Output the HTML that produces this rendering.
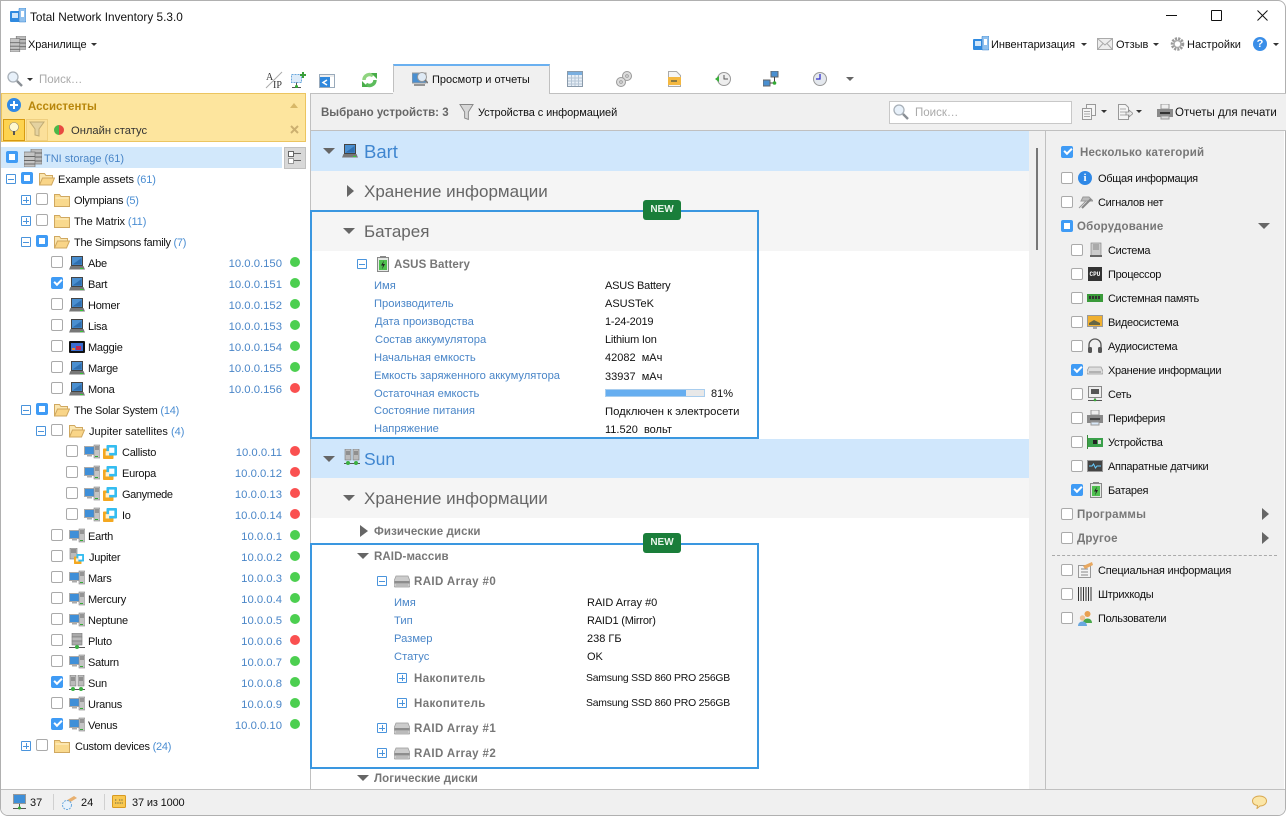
<!DOCTYPE html>
<html lang="ru"><head><meta charset="utf-8"><title>Total Network Inventory 5.3.0</title>
<style>
html,body{margin:0;padding:0;background:#fff}
#w{position:relative;width:1286px;height:816px;overflow:hidden;background:#fff;font:11px/20px "Liberation Sans","Noto Sans CJK SC",sans-serif;color:#111}
#w div,#w span,#w svg,#w i,#w u,#w em,#w b{position:absolute;white-space:nowrap}
#w span{margin-top:1px}
#w i,#w u,#w em{font-style:normal;text-decoration:none;display:block}
.r{left:0;width:310px;height:20px}
.r span{letter-spacing:-.25px}
.c{width:10px;height:10px;border:1px solid #aaa;border-radius:2px;background:#fff;top:4px}
.k{width:12px;height:12px;background:#3f9bf5;border-radius:2px;top:4px}
.k:after{content:"";position:absolute;left:2.5px;top:2px;width:6px;height:3px;border:solid #fff;border-width:0 0 2px 2px;transform:rotate(-45deg)}
.m{width:12px;height:12px;background:#3f9bf5;border-radius:2px;top:4px}
.m:after{content:"";position:absolute;left:3px;top:3px;width:6px;height:6px;background:#fff}
.tr .c,.tr .k,.tr .m{top:3px}
.e{width:8px;height:8px;border:1px solid #4a94dc;border-radius:1px;top:5px}
.e:before{content:"";position:absolute;left:1px;top:3px;width:6px;height:1px;margin-top:.5px;background:#4a94dc}
.p:after{content:"";position:absolute;left:3.5px;top:1px;width:1px;height:6px;background:#4a94dc}
.i{width:16px;height:16px;top:2px}
.n{color:#4a8dd2}
#w .ip{left:180px;width:102px;text-align:right;color:#4a86c8;top:0;margin-top:1px;font-size:11.3px;font-weight:normal}
.d{left:290px;top:4px;width:10px;height:10px;border-radius:50%}
.g{background:#4ccf50}.o{background:#fa5050}
.a{color:#4a86c8;font-size:11.2px}
#w .h{color:#777;font-weight:bold;font-size:11.5px;letter-spacing:.1px}
#w .h2{letter-spacing:.4px}
#w .big{font-size:17px;color:#666;line-height:24px;margin-top:1px}
.sec{left:311px;width:718px;height:40px}
.dn{width:0;height:0;border:solid transparent;border-width:6px 6px 0;border-top-color:#666}
.rt{width:0;height:0;border:solid transparent;border-width:6px 0 6px 8px;border-left-color:#666}
.sa{width:0;height:0;border:solid transparent;border-width:3px 3px 0;border-top-color:#333}
.box{border:2px solid #3a97e0;box-sizing:border-box;left:310px;width:449px}
.new{left:643px;width:38px;height:20px;background:#1a7e3a;border-radius:3px;color:#e8f5ea;font-weight:bold;font-size:10px;line-height:20px;text-align:center}
.q{height:20px;left:0;width:1286px}
.q span{letter-spacing:-.3px}
#w .q span.h{letter-spacing:.2px}
.v{letter-spacing:-.2px}
</style></head><body>
<div id="w">
<svg width="0" height="0" style="position:absolute">
<defs>
<symbol id="lap" viewBox="0 0 16 16"><rect x="2.5" y="1.5" width="11" height="9" fill="#4a8fd0" stroke="#444"/><path d="M3.500 9.500 12.500 3v6.500z" fill="#2f6fb0"/><path d="M1.500 11h13l1.500 3.500H0z" fill="#777"/><path d="M11 13.500h3" stroke="#3c3"/></symbol>
<symbol id="tab" viewBox="0 0 16 16"><rect x="0" y="2" width="16" height="12" rx="1" fill="#111"/><rect x="2" y="4" width="12" height="8" fill="#3a6cd0"/><rect x="7" y="7" width="5" height="4" fill="#c02850"/><rect x="3" y="9" width="3" height="2" fill="#e88030"/></symbol>
<symbol id="pc" viewBox="0 0 16 16"><rect x=".5" y="2.500" width="10" height="8" fill="#3f8fd8" stroke="#aaa"/><path d="M3 10.500h5v2H3z" fill="#aaa"/><rect x="10" y="1" width="6" height="13" fill="#c4c4c4" stroke="#888" stroke-width=".6"/><path d="M11 3h4M11 5h4" stroke="#666"/><rect x="11" y="12" width="3" height="1" fill="#3a3"/></symbol>
<symbol id="vm" viewBox="0 0 16 16"><rect x="0" y="4" width="12" height="12" rx="1" fill="#f4a820"/><rect x="4" y="0" width="12" height="12" rx="1" fill="#35bdf0"/><rect x="7" y="3" width="6" height="6" fill="#fff"/><rect x="3" y="7" width="4" height="5" fill="#fdf0d0"/></symbol>
<symbol id="srv" viewBox="0 0 16 16"><rect x="3" y="0" width="10" height="4" fill="#aaa" stroke="#777" stroke-width=".6"/><rect x="3" y="4" width="10" height="4" fill="#bbb" stroke="#777" stroke-width=".6"/><rect x="3" y="8" width="10" height="4" fill="#aaa" stroke="#777" stroke-width=".6"/><path d="M0 14.500h16" stroke="#555"/><circle cx="8" cy="14" r="2" fill="#3cb043"/></symbol>
<symbol id="srv2" viewBox="0 0 16 16"><rect x="1" y="0" width="6" height="11" fill="#bbb" stroke="#777" stroke-width=".6"/><rect x="9" y="0" width="6" height="11" fill="#bbb" stroke="#777" stroke-width=".6"/><path d="M2 3h4M2 5h4M10 3h4M10 5h4" stroke="#666"/><path d="M0 14.500h16" stroke="#555"/><circle cx="4" cy="14" r="2" fill="#3cb043"/><circle cx="12" cy="14" r="2" fill="#3cb043"/></symbol>
<symbol id="stor" viewBox="0 0 18 18"><rect x="7" y="0" width="11" height="15" fill="#bbb" stroke="#777" stroke-width=".7"/><rect x="0" y="3" width="11" height="15" fill="#c4c4c4" stroke="#777" stroke-width=".7"/><path d="M0 7.500h11M0 11.500h11M0 15h11M11 4h7M11 8h7M11 12h7" stroke="#666"/></symbol>
<symbol id="fold" viewBox="0 0 16 16"><path d="M.5 14.500V2.500h5l1.500 2h8.500v10z" fill="#f9d98e" stroke="#d0a860"/><path d="M1.500 6h13" stroke="#fff3d0"/></symbol>
<symbol id="ofold" viewBox="0 0 16 16"><path d="M.5 14V2.500h5l1.500 2h6.500V7" fill="#fbe6b0" stroke="#d0a860"/><path d="M.5 14l3-7h12l-3 7z" fill="#f9d588" stroke="#d0a860"/></symbol>
<symbol id="mag" viewBox="0 0 16 16"><circle cx="6" cy="6" r="5" fill="#e8f1fa" stroke="#a8b0b8" stroke-width="1.300"/><path d="M10 10l5 5" stroke="#8a8f95" stroke-width="2.400"/></symbol>
<symbol id="inv" viewBox="0 0 16 16"><rect x="0" y="3" width="10" height="11" rx="1" fill="#2f8ae0"/><rect x="2" y="5" width="6" height="5" fill="#cfe6fb"/><rect x="9" y="0" width="7" height="14" rx="1" fill="#8fc0ee" stroke="#3a85d0" stroke-width=".6"/><rect x="11" y="3" width="3" height="6" fill="#fff"/></symbol>
<symbol id="fun" viewBox="0 0 16 18"><path d="M1 1h14L10 9v8l-4-1.500V9z" fill="#d8d8d8" stroke="#888"/></symbol>
<symbol id="bat" viewBox="0 0 12 16"><rect x="3" y="0" width="6" height="2" fill="#888"/><rect x=".5" y="1.500" width="11" height="14" fill="#e4e8e4" stroke="#888"/><rect x="2" y="4" width="8" height="10" fill="#4fc04f"/><path d="M7 4.500 4 9.500h2l-1 4 3-5.500H6z" fill="#222"/></symbol>
<symbol id="hdd" viewBox="0 0 16 16"><path d="M2 3h12l2 5v5a1 1 0 0 1-1 1H1a1 1 0 0 1-1-1V8z" fill="#ccc" stroke="#999" stroke-width=".7"/><path d="M.5 8h15v2.500H.5z" fill="#8d8d8d"/><path d="M2 12h12" stroke="#aaa"/></symbol>
</defs></svg>

<!-- window frame -->
<div style="left:0;top:0;width:1284px;height:814px;border:1px solid #b0b0b0;border-radius:0 8px 8px 8px"></div>

<!-- title -->
<svg class="i" style="left:10px;top:8px"><use href="#inv"/></svg>
<span style="left:30px;top:6px;font-size:11.8px">Total Network Inventory 5.3.0</span>
<div style="left:1166px;top:15px;width:11px;height:1px;background:#111"></div>
<div style="left:1211px;top:10px;width:9px;height:9px;border:1px solid #111;border-radius:1px"></div>
<svg style="left:1257px;top:10px;width:11px;height:11px"><path d="M.5.500l10 10M10.500.500l-10 10" stroke="#111" fill="none"/></svg>

<!-- menu -->
<svg class="i" style="left:10px;top:36px"><use href="#stor"/></svg>
<span style="left:28px;top:34px;letter-spacing:-.1px">Хранилище</span><i class="sa" style="left:91px;top:43px"></i>
<svg class="i" style="left:973px;top:36px"><use href="#inv"/></svg>
<span style="left:991px;top:34px;letter-spacing:-.05px">Инвентаризация</span><i class="sa" style="left:1081px;top:43px"></i>
<svg style="left:1097px;top:38px;width:16px;height:12px"><rect x=".5" y=".5" width="15" height="11" fill="#eee" stroke="#aaa"/><path d="M.5.500 8 7l7.500-6.500M.5 11.500 6 5.500M15.500 11.500 10 5.500" fill="none" stroke="#aaa"/></svg>
<span style="left:1116px;top:34px">Отзыв</span><i class="sa" style="left:1153px;top:43px"></i>
<svg class="i" style="left:1170px;top:36px"><circle cx="7.500" cy="8" r="5" fill="none" stroke="#999" stroke-width="3.500" stroke-dasharray="2 1"/><circle cx="7.500" cy="8" r="3.500" fill="none" stroke="#aaa" stroke-width="1.500"/></svg>
<span style="left:1187px;top:34px">Настройки</span>
<div style="left:1253px;top:37px;width:14px;height:14px;border-radius:50%;background:#3a8ee8;color:#fff;font-weight:bold;font-size:11px;line-height:14px;text-align:center">?</div><i class="sa" style="left:1273px;top:43px"></i>

<!-- left search row -->
<svg class="i" style="left:7px;top:71px"><use href="#mag"/></svg><i class="sa" style="left:27px;top:78px"></i>
<span style="left:39px;top:69px;color:#aaa;font-size:11.5px">Поиск…</span>
<svg style="left:265px;top:71px;width:18px;height:18px"><path d="M1 17 17 1" stroke="#aaa"/><text x="1" y="9" font-family="Liberation Serif" font-size="10" fill="#333">A</text><text x="8" y="17" font-family="Liberation Serif" font-size="10" fill="#333">IP</text></svg>
<svg style="left:290px;top:71px;width:16px;height:18px"><rect x="1.500" y="3.500" width="10" height="8" fill="#dcebf9" stroke="#6aa8dd" stroke-dasharray="2 1"/><path d="M10 3h2V1h2v2h2v2h-2v2h-2V5h-2z" fill="#3a9e3a"/><path d="M6.500 11.500v4M2 16.500h9" stroke="#555"/><circle cx="6.500" cy="15.500" r="1.500" fill="#3a3"/></svg>

<!-- tabs -->
<div style="left:310px;top:93px;width:976px;height:1px;background:#c0c0c0"></div>
<svg style="left:319px;top:74px;width:16px;height:14px"><rect x=".5" y=".5" width="15" height="13" fill="#eee" stroke="#9ab"/><rect x="1" y="3" width="10" height="10" fill="#2f88dd"/><rect x="11" y="3" width="4" height="10" fill="#fff"/><path d="M8 6 4 8.500 8 11" fill="none" stroke="#fff" stroke-width="1.500"/></svg>
<svg style="left:362px;top:72px;width:15px;height:16px"><path d="M2 8a5.500 5.500 0 0 1 9-4.200" fill="none" stroke="#8fd47f" stroke-width="3.500"/><path d="M13 8a5.500 5.500 0 0 1-9 4.200" fill="none" stroke="#5cbc5c" stroke-width="3.500"/><path d="M9 1h6v6zM6 15H0V9z" fill="#49ad49"/></svg>
<div style="left:393px;top:64px;width:155px;height:28px;border:1px solid #c0c0c0;border-top:2px solid #6ab0f0;border-bottom:none;background:#f0f0f0"></div>
<div style="left:394px;top:90px;width:155px;height:5px;background:#f0f0f0"></div>
<svg class="i" style="left:412px;top:71px"><rect x="0" y="2" width="14" height="10" fill="#4a8fd0" stroke="#999"/><circle cx="10" cy="6" r="4.500" fill="#dfeaf5" stroke="#999"/><path d="M13 9l3 3M2 14h11" stroke="#777" stroke-width="1.500"/></svg>
<span style="left:432px;top:69px">Просмотр и отчеты</span>
<svg class="i" style="left:567px;top:71px"><rect x=".5" y=".5" width="15" height="15" fill="#e8eff7" stroke="#8a9aaa"/><rect x="1" y="1" width="14" height="3" fill="#7aafe0"/><path d="M1 7h14M1 10h14M1 13h14M4.500 4v11M8 4v11M11.500 4v11" stroke="#b5c5d5"/></svg>
<svg class="i" style="left:616px;top:71px"><circle cx="11" cy="5" r="4.500" fill="#ddd" stroke="#999"/><circle cx="5" cy="11" r="4.500" fill="#ddd" stroke="#999"/><circle cx="11" cy="5" r="1.300" fill="#fff" stroke="#999"/><circle cx="5" cy="11" r="1.300" fill="#fff" stroke="#999"/></svg>
<svg class="i" style="left:667px;top:71px"><path d="M1.500.500h8l4 4v11h-12z" fill="#f5f5f5" stroke="#aaa"/><rect x="1" y="6" width="13" height="8" fill="#f4b840"/><path d="M4 10h6M4 10h1" stroke="#664" stroke-width="1.500"/></svg>
<svg class="i" style="left:715px;top:71px"><circle cx="9" cy="8" r="6.500" fill="#eee" stroke="#999"/><path d="M9 4v4h4" stroke="#555" fill="none"/><path d="M0 8l4-3v6z" fill="#3ab03a"/></svg>
<svg class="i" style="left:763px;top:71px"><rect x="8" y="0" width="7" height="6" fill="#4a8fd0" stroke="#666"/><rect x="0" y="9" width="7" height="6" fill="#4a8fd0" stroke="#666"/><path d="M11.500 6v6H7" stroke="#444" fill="none"/><circle cx="11.500" cy="12" r="1.800" fill="#3a3"/></svg>
<svg class="i" style="left:813px;top:71px"><circle cx="7" cy="8" r="6.500" fill="#e4e8ee" stroke="#999"/><path d="M7 3v5H3" stroke="#33c" fill="none" stroke-width="1.300"/></svg>
<i class="sa" style="left:846px;top:77px;border-width:4px 4px 0;border-top-color:#666"></i>

<!-- left assist -->
<div style="left:1px;top:93px;width:305px;height:49px;background:#fde59e;border:1px solid #ecc560;box-sizing:border-box"></div>
<div style="left:7px;top:98px;width:14px;height:14px;border-radius:50%;background:#2f88e6"></div>
<div style="left:10px;top:104px;width:8px;height:2px;background:#fff"></div><div style="left:13px;top:101px;width:2px;height:8px;background:#fff"></div>
<span style="left:28px;top:96px;font-weight:bold;color:#b8860b;font-size:11.5px">Ассистенты</span>
<i style="left:290px;top:103px;width:0;height:0;border:solid transparent;border-width:0 4px 5px;border-bottom-color:#d8b868"></i>
<div style="left:3px;top:119px;width:20px;height:20px;background:#fdd34f;border:1px solid #d89a10"></div>
<svg class="i" style="left:6px;top:121px"><circle cx="8" cy="6" r="4.500" fill="#fff8d0" stroke="#888" stroke-width=".6"/><path d="M7 10h2v4H7z" fill="#555"/></svg>
<div style="left:26px;top:119px;width:20px;height:20px;background:#fbe09a;border:1px solid #efcf80"></div>
<svg class="i" style="left:29px;top:121px"><path d="M1 1h14L10 8v7l-4-1V8z" fill="#e4d2a0" stroke="#c0ab74"/></svg>
<svg style="left:54px;top:125px;width:10px;height:10px"><path d="M5 0a5 5 0 0 0 0 10z" fill="#4cb848"/><path d="M5 0a5 5 0 0 1 0 10z" fill="#e84a40"/></svg>
<span style="left:71px;top:120px;color:#333;font-size:11.2px">Онлайн статус</span>
<svg style="left:290px;top:125px;width:9px;height:9px"><path d="M1 1l7 7M8 1 1 8" stroke="#ccb070" stroke-width="2"/></svg>

<!-- toolbar -->
<div style="left:311px;top:94px;width:975px;height:36px;background:#f0f0f0"></div>
<div style="left:393px;top:92px;width:155px;height:3px;background:#f0f0f0"></div>
<div style="left:311px;top:130px;width:975px;height:1px;background:#c0c0c0"></div>
<div style="left:310px;top:93px;width:1px;height:696px;background:#c0c0c0"></div>
<span style="left:321px;top:102px;font-weight:bold;color:#666;font-size:11.5px">Выбрано устройств: 3</span>
<svg style="left:459px;top:103px;width:15px;height:18px"><use href="#fun"/></svg>
<span style="left:478px;top:102px;letter-spacing:-.08px">Устройства с информацией</span>
<div style="left:889px;top:101px;width:181px;height:21px;background:#fff;border:1px solid #c8c8c8"></div>
<svg class="i" style="left:893px;top:104px"><use href="#mag"/></svg>
<span style="left:915px;top:102px;color:#aaa;font-size:11.5px">Поиск…</span>
<svg class="i" style="left:1081px;top:104px"><rect x="5.500" y=".5" width="9" height="11" fill="#f5f5f5" stroke="#999"/><rect x="1.500" y="4.500" width="9" height="11" fill="#f5f5f5" stroke="#999"/><path d="M3 7.500h6M3 10h6M3 12.500h6" stroke="#aaa"/></svg><i class="sa" style="left:1101px;top:110px"></i>
<svg class="i" style="left:1117px;top:104px"><path d="M1.500.500h7l3 3v12h-10z" fill="#f5f5f5" stroke="#999"/><path d="M3 5h6M3 8h6M3 11h6" stroke="#aaa"/><path d="M9 8h3V6l4 3.500-4 3.500v-2H9z" fill="#e8e8e8" stroke="#888" stroke-width=".7"/></svg><i class="sa" style="left:1136px;top:110px"></i>
<svg class="i" style="left:1157px;top:104px"><rect x="4" y="0" width="8" height="5" fill="#eee" stroke="#999"/><rect x="0" y="5" width="16" height="8" fill="#8a8a8a"/><rect x="3" y="8" width="10" height="2" fill="#333"/><rect x="4" y="12" width="8" height="3" fill="#ddd" stroke="#999"/></svg>
<span style="left:1175px;top:102px;font-size:11.5px">Отчеты для печати</span>

<!-- scroll col + right panel bg -->
<div style="left:1029px;top:131px;width:16px;height:658px;background:#f0f0f0"></div>
<div style="left:1036px;top:148px;width:2px;height:102px;background:#777"></div>
<div style="left:1045px;top:131px;width:1px;height:658px;background:#c0c0c0"></div>
<div style="left:1046px;top:131px;width:238px;height:658px;background:#f0f0f0"></div>

<!-- center -->
<div class="sec" style="top:131px;background:#d0e7fc"><i class="dn" style="left:12px;top:17px"></i>
<svg class="i" style="left:31px;top:12px"><use href="#lap"/></svg><span class="big" style="left:53px;top:8px;color:#3f86d0;font-size:18.5px">Bart</span></div>
<div class="sec" style="top:171px;background:#f5f5f5"><i class="rt" style="left:36px;top:14px;border-width:6px 0 6px 7px"></i><span class="big" style="left:53px;top:8px">Хранение информации</span></div>
<div class="sec" style="top:211px;background:#f5f5f5"><i class="dn" style="left:32px;top:17px"></i><span class="big" style="left:53px;top:8px">Батарея</span></div>

<div class="r" style="left:311px;width:440px;top:254px">
<i class="e" style="left:46px"></i><svg style="left:66px;top:2px;width:12px;height:16px"><use href="#bat"/></svg><span class="h" style="left:83px">ASUS Battery</span></div>
<span class="a" style="left:374px;top:275px">Имя</span><span class="v" style="left:605px;top:275px">ASUS Battery</span>
<span class="a" style="left:374px;top:293px">Производитель</span><span style="left:605px;top:293px">ASUSTeK</span>
<span class="a" style="left:375px;top:311px">Дата производства</span><span class="v" style="left:605px;top:311px">1-24-2019</span>
<span class="a" style="left:375px;top:329px">Состав аккумулятора</span><span class="v" style="left:605px;top:329px">Lithium Ion</span>
<span class="a" style="left:374px;top:347px">Начальная емкость</span><span style="left:605px;top:347px">42082&nbsp; мАч</span>
<span class="a" style="left:374px;top:365px">Емкость заряженного аккумулятора</span><span style="left:605px;top:366px">33937&nbsp; мАч</span>
<span class="a" style="left:374px;top:383px">Остаточная емкость</span>
<div style="left:605px;top:389px;width:98px;height:6px;border:1px solid #a8cdee;background:#e8e8e8"></div><div style="left:606px;top:390px;width:80px;height:6px;background:#66aef0"></div>
<span style="left:711px;top:383px">81%</span>
<span class="a" style="left:374px;top:400px">Состояние питания</span><span style="left:605px;top:401px;font-size:11.3px">Подключен к электросети</span>
<span class="a" style="left:374px;top:418px">Напряжение</span><span style="left:605px;top:419px">11.520&nbsp; вольт</span>

<div class="sec" style="top:439px;background:#d0e7fc;height:39px"><i class="dn" style="left:12px;top:17px"></i>
<svg class="i" style="left:33px;top:10px"><use href="#srv2"/></svg><span class="big" style="left:53px;top:7px;color:#3f86d0;font-size:17.5px">Sun</span></div>
<div class="sec" style="top:478px;background:#f5f5f5"><i class="dn" style="left:32px;top:17px"></i><span class="big" style="left:53px;top:8px">Хранение информации</span></div>

<i class="rt" style="left:360px;top:525px"></i><span class="h" style="left:374px;top:521px">Физические диски</span>
<i class="dn" style="left:357px;top:553px"></i><span class="h" style="left:374px;top:546px">RAID-массив</span>
<div class="r" style="left:311px;width:440px;top:571px"><i class="e" style="left:66px"></i><svg class="i" style="left:83px"><use href="#hdd"/></svg><span class="h h2" style="left:103px">RAID Array #0</span></div>
<span class="a" style="left:394px;top:592px">Имя</span><span style="left:587px;top:592px">RAID Array #0</span>
<span class="a" style="left:394px;top:610px">Тип</span><span class="v" style="left:587px;top:610px">RAID1 (Mirror)</span>
<span class="a" style="left:394px;top:628px">Размер</span><span style="left:587px;top:628px">238 ГБ</span>
<span class="a" style="left:394px;top:646px">Статус</span><span style="left:587px;top:646px">OK</span>
<div class="r" style="left:311px;width:440px;top:668px"><i class="e p" style="left:86px"></i><span class="h h2" style="left:103px">Накопитель</span><span style="left:275px;font-size:10.4px;letter-spacing:-.2px">Samsung SSD 860 PRO 256GB</span></div>
<div class="r" style="left:311px;width:440px;top:693px"><i class="e p" style="left:86px"></i><span class="h h2" style="left:103px">Накопитель</span><span style="left:275px;font-size:10.4px;letter-spacing:-.2px">Samsung SSD 860 PRO 256GB</span></div>
<div class="r" style="left:311px;width:440px;top:718px"><i class="e p" style="left:66px"></i><svg class="i" style="left:83px"><use href="#hdd"/></svg><span class="h h2" style="left:103px">RAID Array #1</span></div>
<div class="r" style="left:311px;width:440px;top:743px"><i class="e p" style="left:66px"></i><svg class="i" style="left:83px"><use href="#hdd"/></svg><span class="h h2" style="left:103px">RAID Array #2</span></div>
<i class="dn" style="left:357px;top:775px"></i><span class="h" style="left:374px;top:768px">Логические диски</span>

<div class="box" style="top:210px;height:229px"></div>
<div class="new" style="top:200px">NEW</div>
<div class="box" style="top:543px;height:226px"></div>
<div class="new" style="top:533px">NEW</div>

<!-- tree -->
<div style="left:1px;top:147px;width:281px;height:21px;background:#d2e8fb"></div>
<div class="tr">
<div class="r" style="top:148px"><i class="m" style="left:6px"></i><svg style="left:24px;top:1px;width:18px;height:18px"><use href="#stor"/></svg><span style="left:44px;color:#4a86c8;letter-spacing:0">TNI storage (61)</span></div>
<div style="left:284px;top:147px;width:20px;height:20px;background:#d8d8d8;border:1px solid #c0c0c0"></div>
<div style="left:288px;top:151px;width:4px;height:4px;border:1px solid #666;background:#fff"></div><div style="left:294px;top:153px;width:7px;height:1px;background:#666"></div>
<div style="left:288px;top:158px;width:4px;height:4px;border:1px solid #999;background:#fff"></div><div style="left:294px;top:160px;width:7px;height:1px;background:#666"></div>

<div class="r" style="top:169px"><i class="e" style="left:6px"></i><i class="m" style="left:21px"></i><svg class="i" style="left:39px"><use href="#ofold"/></svg><span style="left:58px;letter-spacing:-.13px">Example assets <b class="n" style="position:static;font-weight:normal">(61)</b></span></div>
<div class="r" style="top:190px"><i class="e p" style="left:21px"></i><i class="c" style="left:36px"></i><svg class="i" style="left:54px"><use href="#fold"/></svg><span style="left:74px;letter-spacing:-.3px">Olympians <b class="n" style="position:static;font-weight:normal">(5)</b></span></div>
<div class="r" style="top:211px"><i class="e p" style="left:21px"></i><i class="c" style="left:36px"></i><svg class="i" style="left:54px"><use href="#fold"/></svg><span style="left:74px;letter-spacing:-.1px">The Matrix <b class="n" style="position:static;font-weight:normal">(11)</b></span></div>
<div class="r" style="top:232px"><i class="e" style="left:21px"></i><i class="m" style="left:36px"></i><svg class="i" style="left:54px"><use href="#ofold"/></svg><span style="left:74px;letter-spacing:-.28px">The Simpsons family <b class="n" style="position:static;font-weight:normal">(7)</b></span></div>

<div class="r" style="top:253px"><i class="c" style="left:51px"></i><svg class="i" style="left:69px"><use href="#lap"/></svg><span style="left:88px">Abe</span><b class="ip">10.0.0.150</b><u class="d g"></u></div>
<div class="r" style="top:274px"><i class="k" style="left:51px"></i><svg class="i" style="left:69px"><use href="#lap"/></svg><span style="left:88px">Bart</span><b class="ip">10.0.0.151</b><u class="d g"></u></div>
<div class="r" style="top:295px"><i class="c" style="left:51px"></i><svg class="i" style="left:69px"><use href="#lap"/></svg><span style="left:88px">Homer</span><b class="ip">10.0.0.152</b><u class="d g"></u></div>
<div class="r" style="top:316px"><i class="c" style="left:51px"></i><svg class="i" style="left:69px"><use href="#lap"/></svg><span style="left:88px">Lisa</span><b class="ip">10.0.0.153</b><u class="d g"></u></div>
<div class="r" style="top:337px"><i class="c" style="left:51px"></i><svg class="i" style="left:69px"><use href="#tab"/></svg><span style="left:88px">Maggie</span><b class="ip">10.0.0.154</b><u class="d g"></u></div>
<div class="r" style="top:358px"><i class="c" style="left:51px"></i><svg class="i" style="left:69px"><use href="#lap"/></svg><span style="left:88px">Marge</span><b class="ip">10.0.0.155</b><u class="d g"></u></div>
<div class="r" style="top:379px"><i class="c" style="left:51px"></i><svg class="i" style="left:69px"><use href="#lap"/></svg><span style="left:88px">Mona</span><b class="ip">10.0.0.156</b><u class="d o"></u></div>

<div class="r" style="top:400px"><i class="e" style="left:21px"></i><i class="m" style="left:36px"></i><svg class="i" style="left:54px"><use href="#ofold"/></svg><span style="left:74px;letter-spacing:-.24px">The Solar System <b class="n" style="position:static;font-weight:normal">(14)</b></span></div>
<div class="r" style="top:421px"><i class="e" style="left:36px"></i><i class="c" style="left:51px"></i><svg class="i" style="left:69px"><use href="#ofold"/></svg><span style="left:89px;letter-spacing:0">Jupiter satellites <b class="n" style="position:static;font-weight:normal">(4)</b></span></div>

<div class="r" style="top:442px"><i class="c" style="left:66px"></i><svg class="i" style="left:84px"><use href="#pc"/></svg><svg style="left:103px;top:3px;width:14px;height:14px"><use href="#vm"/></svg><span style="left:122px">Callisto</span><b class="ip">10.0.0.11</b><u class="d o"></u></div>
<div class="r" style="top:463px"><i class="c" style="left:66px"></i><svg class="i" style="left:84px"><use href="#pc"/></svg><svg style="left:103px;top:3px;width:14px;height:14px"><use href="#vm"/></svg><span style="left:122px">Europa</span><b class="ip">10.0.0.12</b><u class="d o"></u></div>
<div class="r" style="top:484px"><i class="c" style="left:66px"></i><svg class="i" style="left:84px"><use href="#pc"/></svg><svg style="left:103px;top:3px;width:14px;height:14px"><use href="#vm"/></svg><span style="left:122px;letter-spacing:-.4px">Ganymede</span><b class="ip">10.0.0.13</b><u class="d o"></u></div>
<div class="r" style="top:505px"><i class="c" style="left:66px"></i><svg class="i" style="left:84px"><use href="#pc"/></svg><svg style="left:103px;top:3px;width:14px;height:14px"><use href="#vm"/></svg><span style="left:122px">Io</span><b class="ip">10.0.0.14</b><u class="d o"></u></div>

<div class="r" style="top:526px"><i class="c" style="left:51px"></i><svg class="i" style="left:69px"><use href="#pc"/></svg><span style="left:88px">Earth</span><b class="ip">10.0.0.1</b><u class="d g"></u></div>
<div class="r" style="top:547px"><i class="c" style="left:51px"></i><svg style="left:69px;top:1px;width:9px;height:15px"><rect x="1" y="0" width="7" height="11" fill="#bbb" stroke="#777" stroke-width=".6"/><path d="M2 2h5M2 4h5" stroke="#666"/></svg><svg style="left:74px;top:7px;width:10px;height:10px"><use href="#vm"/></svg><span style="left:89px">Jupiter</span><b class="ip">10.0.0.2</b><u class="d g"></u></div>
<div class="r" style="top:568px"><i class="c" style="left:51px"></i><svg class="i" style="left:69px"><use href="#pc"/></svg><span style="left:88px">Mars</span><b class="ip">10.0.0.3</b><u class="d g"></u></div>
<div class="r" style="top:589px"><i class="c" style="left:51px"></i><svg class="i" style="left:69px"><use href="#pc"/></svg><span style="left:88px">Mercury</span><b class="ip">10.0.0.4</b><u class="d g"></u></div>
<div class="r" style="top:610px"><i class="c" style="left:51px"></i><svg class="i" style="left:69px"><use href="#pc"/></svg><span style="left:88px">Neptune</span><b class="ip">10.0.0.5</b><u class="d g"></u></div>
<div class="r" style="top:631px"><i class="c" style="left:51px"></i><svg class="i" style="left:69px"><use href="#srv"/></svg><span style="left:88px">Pluto</span><b class="ip">10.0.0.6</b><u class="d o"></u></div>
<div class="r" style="top:652px"><i class="c" style="left:51px"></i><svg class="i" style="left:69px"><use href="#pc"/></svg><span style="left:88px">Saturn</span><b class="ip">10.0.0.7</b><u class="d g"></u></div>
<div class="r" style="top:673px"><i class="k" style="left:51px"></i><svg class="i" style="left:69px"><use href="#srv2"/></svg><span style="left:88px">Sun</span><b class="ip">10.0.0.8</b><u class="d g"></u></div>
<div class="r" style="top:694px"><i class="c" style="left:51px"></i><svg class="i" style="left:69px"><use href="#pc"/></svg><span style="left:88px">Uranus</span><b class="ip">10.0.0.9</b><u class="d g"></u></div>
<div class="r" style="top:715px"><i class="k" style="left:51px"></i><svg class="i" style="left:69px"><use href="#pc"/></svg><span style="left:88px">Venus</span><b class="ip">10.0.0.10</b><u class="d g"></u></div>
<div class="r" style="top:736px"><i class="e p" style="left:21px"></i><i class="c" style="left:36px"></i><svg class="i" style="left:54px"><use href="#fold"/></svg><span style="left:75px">Custom devices <b class="n" style="position:static;font-weight:normal">(24)</b></span></div>
</div>

<!-- right panel -->
<div class="q" style="top:142px"><i class="k" style="left:1061px"></i><span class="h" style="left:1080px">Несколько категорий</span></div>
<div class="q" style="top:168px"><i class="c" style="left:1061px"></i><div style="left:1078px;top:3px;width:14px;height:14px;border-radius:50%;background:#2f88e6;color:#fff;font:bold 11px/14px 'Liberation Serif',serif;text-align:center">i</div><span style="left:1098px">Общая информация</span></div>
<div class="q" style="top:192px"><i class="c" style="left:1061px"></i><svg class="i" style="left:1077px"><path d="M2 14 9 7M4 7h12L12 3H6z" stroke="#999" fill="#bbb"/><path d="M5 14l9-9" stroke="#888" stroke-width="2"/></svg><span style="left:1098px">Сигналов нет</span></div>
<div class="q" style="top:216px"><i class="m" style="left:1061px"></i><span class="h" style="left:1077px">Оборудование</span><i class="dn" style="left:1258px;top:7px"></i></div>
<div class="q" style="top:240px"><i class="c" style="left:1071px"></i><svg class="i" style="left:1088px"><rect x="3" y="1" width="10" height="13" fill="#ccc" stroke="#888" stroke-width=".7"/><path d="M5 3h6M5 5h6M5 7h6" stroke="#888"/><rect x="2" y="13" width="12" height="2" fill="#666"/></svg><span style="left:1108px">Система</span></div>
<div class="q" style="top:264px"><i class="c" style="left:1071px"></i><svg class="i" style="left:1087px"><rect x="1" y="1" width="14" height="14" fill="#333"/><text x="2.500" y="10" font-size="6" font-family="Liberation Mono" fill="#fff" font-weight="bold">CPU</text></svg><span style="left:1108px">Процессор</span></div>
<div class="q" style="top:288px"><i class="c" style="left:1071px"></i><svg class="i" style="left:1087px"><rect x="0" y="4" width="16" height="8" fill="#3a9a3a"/><path d="M2 6h2v3H2zM5 6h2v3H5zM8 6h2v3H8zM11 6h2v3h-2z" fill="#333"/></svg><span style="left:1108px">Системная память</span></div>
<div class="q" style="top:312px"><i class="c" style="left:1071px"></i><svg class="i" style="left:1087px"><rect x=".5" y="1.500" width="15" height="11" fill="#f0b030" stroke="#999"/><path d="M2 9l5-3 6 3v2H2z" fill="#664"/><path d="M6 13h4v2H6z" fill="#aaa"/></svg><span style="left:1108px">Видеосистема</span></div>
<div class="q" style="top:336px"><i class="c" style="left:1071px"></i><svg class="i" style="left:1087px"><path d="M2 10V7a6 6 0 0 1 12 0v3" fill="none" stroke="#555" stroke-width="1.300"/><rect x="1" y="9" width="4" height="6" rx="1.500" fill="#555"/><rect x="11" y="9" width="4" height="6" rx="1.500" fill="#555"/></svg><span style="left:1108px">Аудиосистема</span></div>
<div class="q" style="top:360px"><i class="k" style="left:1071px"></i><svg class="i" style="left:1087px"><path d="M2 5h12l2 4v2a1 1 0 0 1-1 1H1a1 1 0 0 1-1-1V9z" fill="#ddd" stroke="#999" stroke-width=".8"/><path d="M2 10h12" stroke="#888"/></svg><span style="left:1108px">Хранение информации</span></div>
<div class="q" style="top:384px"><i class="c" style="left:1071px"></i><svg class="i" style="left:1087px"><rect x="1.500" y=".5" width="13" height="11" fill="#eee" stroke="#888"/><path d="M4 3h8v5H4z" fill="#555"/><path d="M8 12v2M1 14.500h14" stroke="#555"/><circle cx="8" cy="14" r="1.300" fill="#3a3"/></svg><span style="left:1108px">Сеть</span></div>
<div class="q" style="top:408px"><i class="c" style="left:1071px"></i><svg class="i" style="left:1087px"><rect x="4" y="0" width="8" height="5" fill="#eee" stroke="#999"/><rect x="0" y="5" width="16" height="8" fill="#888"/><rect x="3" y="8" width="10" height="2" fill="#444"/><rect x="4" y="12" width="8" height="3" fill="#d8e8f8" stroke="#999"/></svg><span style="left:1108px">Периферия</span></div>
<div class="q" style="top:432px"><i class="c" style="left:1071px"></i><svg class="i" style="left:1087px"><path d="M.5 1v14" stroke="#3a8a3a"/><rect x="1" y="4" width="15" height="9" fill="#3aa04a"/><rect x="6" y="6" width="4" height="4" fill="#222"/><rect x="11" y="6" width="3" height="4" fill="#ddd"/></svg><span style="left:1108px">Устройства</span></div>
<div class="q" style="top:456px"><i class="c" style="left:1071px"></i><svg class="i" style="left:1087px"><rect x=".5" y="2.500" width="15" height="11" fill="#444" stroke="#999"/><path d="M2 8h3l1.500-2 2 4L10 8h4" stroke="#6cf" fill="none"/></svg><span style="left:1108px">Аппаратные датчики</span></div>
<div class="q" style="top:480px"><i class="k" style="left:1071px"></i><svg style="left:1090px;top:2px;width:12px;height:16px"><use href="#bat"/></svg><span style="left:1108px">Батарея</span></div>
<div class="q" style="top:504px"><i class="c" style="left:1061px"></i><span class="h" style="left:1077px">Программы</span><i class="rt" style="left:1262px;top:4px;border-width:6px 0 6px 7px"></i></div>
<div class="q" style="top:528px"><i class="c" style="left:1061px"></i><span class="h" style="left:1077px">Другое</span><i class="rt" style="left:1262px;top:4px;border-width:6px 0 6px 7px"></i></div>
<div style="left:1052px;top:555px;width:225px;height:0;border-top:1px dashed #aaa"></div>
<div class="q" style="top:560px"><i class="c" style="left:1061px"></i><svg class="i" style="left:1077px"><rect x="1.500" y="3.500" width="12" height="12" fill="#f4f4f4" stroke="#999"/><path d="M4 7h7M4 10h7M4 13h7" stroke="#888"/><path d="M6 4l9-4 1 3-8 4z" fill="#e8a860"/></svg><span style="left:1098px;letter-spacing:-.2px">Специальная информация</span></div>
<div class="q" style="top:584px"><i class="c" style="left:1061px"></i><svg class="i" style="left:1077px"><path d="M1.500 1v14M4 1v14M6.500 1v14M9 1v14M11.500 1v14M14 1v14" stroke="#333" stroke-width="1"/></svg><span style="left:1098px">Штрихкоды</span></div>
<div class="q" style="top:608px"><i class="c" style="left:1061px"></i><svg class="i" style="left:1077px"><circle cx="10.500" cy="4" r="3" fill="#e8a050"/><path d="M6 13c0-6 9-6 9 0z" fill="#4aa84a"/><circle cx="5.500" cy="8" r="2.700" fill="#f0c090"/><path d="M1 16c0-6 9-6 9 0z" fill="#6aa8e0"/></svg><span style="left:1098px">Пользователи</span></div>

<!-- status bar -->
<div style="left:1px;top:789px;width:1284px;height:1px;background:#c0c0c0"></div>
<div style="left:1px;top:790px;width:1284px;height:25px;background:#f0f0f0;border-radius:0 0 7px 7px"></div>
<svg class="i" style="left:12px;top:794px"><rect x="1.500" y=".5" width="12" height="9" fill="#3f8fd8" stroke="#999"/><path d="M7.500 10v3M1 14.500h13" stroke="#555"/><circle cx="7.500" cy="14" r="1.500" fill="#3a3"/></svg>
<span style="left:30px;top:792px">37</span>
<div style="left:53px;top:794px;width:1px;height:16px;background:#d0d0d0"></div>
<svg class="i" style="left:61px;top:794px"><path d="M3 8l10-6 3 2-10 6z" fill="#e8b070"/><circle cx="6" cy="11" r="4.500" fill="#e8f2fb" stroke="#6aa8dd" stroke-dasharray="2 1"/></svg>
<span style="left:81px;top:792px">24</span>
<div style="left:104px;top:794px;width:1px;height:16px;background:#d0d0d0"></div>
<svg style="left:112px;top:795px;width:14px;height:13px"><rect x=".5" y=".5" width="13" height="12" rx="1" fill="#f9c850" stroke="#d89a20"/><path d="M3 5h2M3 8h8M7 5h4" stroke="#664" stroke-dasharray="1 .7"/></svg>
<span style="left:132px;top:792px;letter-spacing:-.15px">37 из 1000</span>
<svg style="left:1252px;top:795px;width:15px;height:14px"><path d="M7.500 1C11.500 1 14.500 3 14.500 6S11.500 11 8 11L5 13.500 5.500 10.500C2.500 10 .5 8.500 .5 6 .5 3 3.500 1 7.500 1z" fill="#fbe6a8" stroke="#d8a850"/></svg>
</div>
</body></html>
